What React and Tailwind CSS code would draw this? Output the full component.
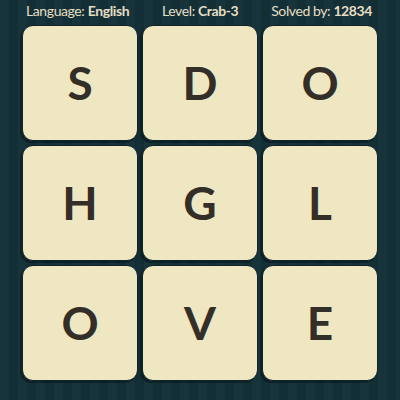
export default function App() {
  const letters = ["S", "D", "O", "H", "G", "L", "O", "V", "E"];
  return (
    <div
      className="w-[400px] h-[400px] overflow-hidden bg-[#16313a] bg-[image:repeating-linear-gradient(90deg,#17343d_0px,#17343d_9px,#142e36_9px,#142e36_18px)] flex flex-col"
      style={{ fontFamily: "Lato, 'Open Sans', sans-serif" }}
    >
      <div className="h-[25px] flex items-center justify-between pl-[26px] pr-[28px] text-[14px] tracking-[-0.4px] text-[#e6dfc2] leading-none pb-[3px]">
        <span>
          Language: <span className="font-bold">English</span>
        </span>
        <span>
          Level: <span className="font-bold">Crab-3</span>
        </span>
        <span>
          Solved by: <span className="font-bold">12834</span>
        </span>
      </div>
      <div className="ml-[22px] w-[356px] grid grid-cols-3 gap-[4px]">
        {letters.map((l, i) => (
          <div
            key={i}
            className="h-[116px] rounded-[11px] bg-[#efe7c1] border border-[#0f2329] shadow-[-2px_2px_0_rgba(5,15,18,0.45)] flex items-center justify-center text-[46px] font-bold text-[#342e28] leading-none"
          >
            {l}
          </div>
        ))}
      </div>
    </div>
  );
}
